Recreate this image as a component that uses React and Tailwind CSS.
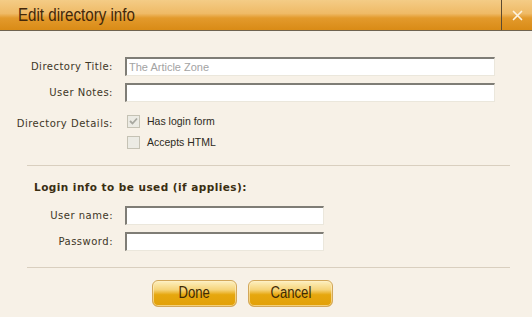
export default function App() {
  const label = "text-right text-[10px] text-[#3d3626] leading-[19px] tracking-[0.5px]";
  const input =
    "h-[19px] bg-white border border-t-[#7f7d76] border-l-[#7f7d76] border-r-[#ebe7dc] border-b-[#ebe7dc] border-t-2 border-l-2 outline-none px-[2px] text-[11px]";

  return (
    <div className="w-[532px] h-[317px] bg-[#f7f1e7] flex flex-col font-['DejaVu_Sans',sans-serif] overflow-hidden">
      {/* title bar */}
      <div className="h-[31px] shrink-0 flex items-stretch border-b border-[#6f6350] bg-[linear-gradient(to_bottom,#f4cc86_0%,#efba66_45%,#e39a2c_60%,#d98b16_100%)]">
        <div className="flex-1 pl-[18px] flex items-center">
          <span className="inline-block origin-left scale-x-[0.84] text-[18px] text-[#42270a] font-['Liberation_Sans',sans-serif] whitespace-nowrap">
            Edit directory info
          </span>
        </div>
        <div className="w-[31px] border-l border-[#5c4a30] flex items-center justify-center">
          <svg width="11" height="11" viewBox="0 0 11 11">
            <path d="M1.5 1.5 L9.5 9.5 M9.5 1.5 L1.5 9.5" stroke="#fdf3e0" strokeWidth="1.7" strokeLinecap="round" />
          </svg>
        </div>
      </div>

      {/* directory section */}
      <div className="grid grid-cols-[113px_370px] gap-x-[12px] pt-[26px]">
        <div className={label}>Directory Title:</div>
        <input
          className={input + " text-[#a3a3a3] font-['Liberation_Sans',sans-serif]"}
          defaultValue="The Article Zone"
          disabled
        />
        <div className={label + " mt-[7px]"}>User Notes:</div>
        <input className={input + " mt-[7px]"} />
        <div className={label + " mt-[12px] leading-[17px]"}>Directory Details:</div>
        <div className="mt-[12px] flex flex-col gap-[6px] font-['Liberation_Sans',sans-serif] text-[10.5px] text-[#2c2a22]">
          <div className="flex items-center gap-[7px] h-[15px] pl-[2px]">
            <span className="w-[13px] h-[13px] border border-[#c5c2b4] bg-[#ecebe4] flex items-center justify-center">
              <svg width="9" height="9" viewBox="0 0 9 9">
                <path d="M1 4 L3.5 6.5 L8 1.5" stroke="#a8a8a0" strokeWidth="1.8" fill="none" />
              </svg>
            </span>
            Has login form
          </div>
          <div className="flex items-center gap-[7px] h-[15px] pl-[2px]">
            <span className="w-[13px] h-[13px] border border-[#c5c2b4] bg-[#ecebe4]" />
            Accepts HTML
          </div>
        </div>
      </div>

      <div className="mx-[27px] w-[483px] mt-[15px] border-t border-[#d9cfbf]" />

      {/* login section */}
      <div className="pl-[34px] pt-[14px] text-[10.5px] font-bold text-[#3a2e12] tracking-[0.45px]">
        Login info to be used (if applies):
      </div>
      <div className="grid grid-cols-[113px_199px] gap-x-[12px] pt-[10px]">
        <div className={label}>User name:</div>
        <input className={input} />
        <div className={label + " mt-[7px]"}>Password:</div>
        <input type="password" className={input + " mt-[7px]"} />
      </div>

      <div className="mx-[27px] w-[483px] mt-[16px] border-t border-[#d9cfbf]" />

      {/* buttons */}
      <div className="flex gap-[11px] pl-[152px] pt-[12px]">
        {["Done", "Cancel"].map((t) => (
          <button
            key={t}
            className="w-[85px] h-[27px] rounded-[6px] border border-[#d2a75a] bg-[linear-gradient(to_bottom,#fdf0c0_0%,#f6d47a_35%,#e6a70e_55%,#e2a008_100%)] shadow-[inset_0_0_0_1px_rgba(255,240,200,0.6)] flex items-center justify-center"
          >
            <span className="inline-block scale-x-[0.82] text-[16px] text-[#3e2a05] font-['Liberation_Sans',sans-serif]">
              {t}
            </span>
          </button>
        ))}
      </div>
    </div>
  );
}
